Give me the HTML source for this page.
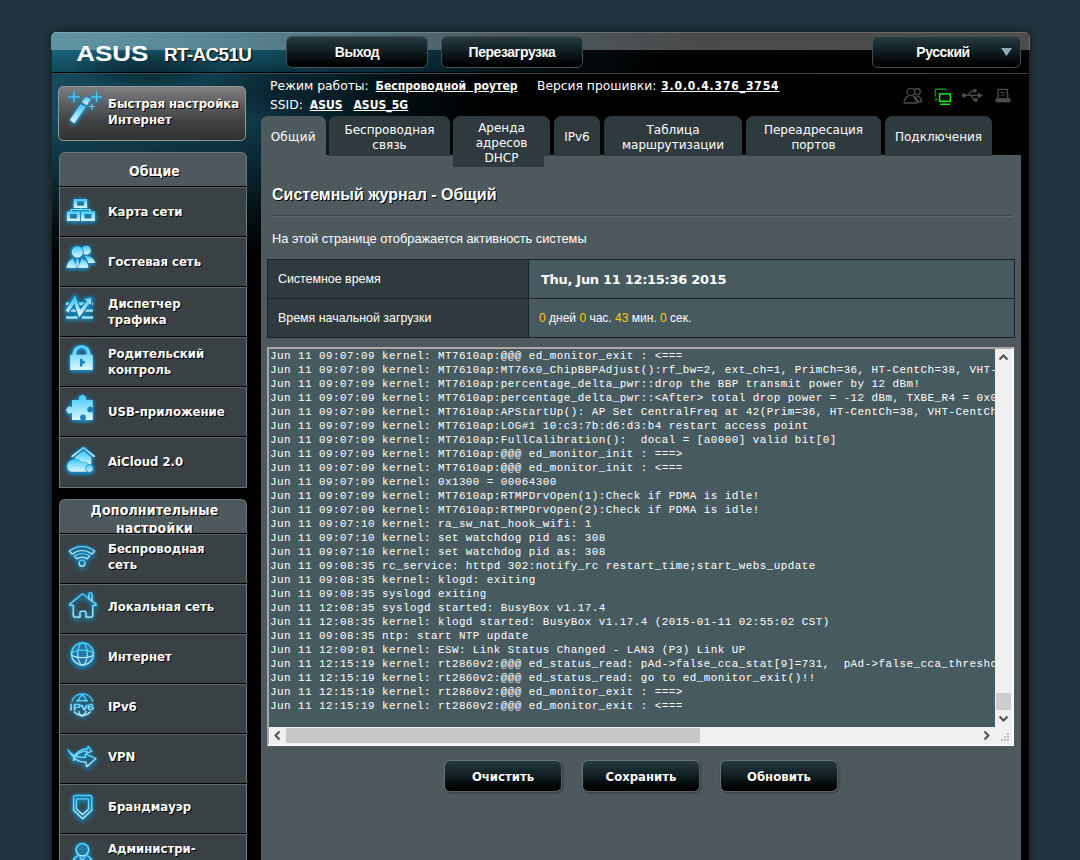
<!DOCTYPE html>
<html lang="ru">
<head>
<meta charset="utf-8">
<title>ASUS Wireless Router RT-AC51U - Системный журнал</title>
<style>
*{box-sizing:border-box;margin:0;padding:0}
html,body{width:1080px;height:860px;overflow:hidden;background:#21333e;}
body{font-family:"DejaVu Sans","Liberation Sans",sans-serif;color:#fff;position:relative}
#wrap{position:absolute;left:51px;top:32px;width:979px;height:828px;background:#000;border-radius:5px 5px 0 0;overflow:hidden}
#wrapsh{position:absolute;left:51px;top:32px;width:979px;height:840px;border-radius:5px 5px 0 0;box-shadow:0 0 7px 1px rgba(6,12,16,.5)}
#bg1{position:absolute;left:0;top:0;width:979px;height:18px;background:linear-gradient(90deg,#6094a3 0,#5a8a98 120px,#52737e 300px,#4c5a60 450px,#4a4a4a 650px,#4d4d4d 979px)}
#bg2{position:absolute;left:0;top:18px;width:979px;height:23px;background:linear-gradient(90deg,rgba(0,0,0,0) 0,rgba(0,0,0,.12) 150px,rgba(0,0,0,.4) 330px,rgba(0,0,0,.8) 480px,#000 620px),linear-gradient(#19627a,#104658)}
#bg3{position:absolute;left:0;top:42px;width:700px;height:260px;background:linear-gradient(90deg,#154a5c 0,#103d4c 190px,#0b2d39 240px,#051a21 300px,#01090c 370px,#000 440px);-webkit-mask-image:linear-gradient(#000 0,#000 45px,rgba(0,0,0,.6) 100px,rgba(0,0,0,.2) 150px,transparent 185px);mask-image:linear-gradient(#000 0,#000 45px,rgba(0,0,0,.6) 100px,rgba(0,0,0,.2) 150px,transparent 185px)}
#hdrline{position:absolute;left:0;top:40px;width:979px;height:1px;background:#000}
#hdrline2{position:absolute;left:0;top:41px;width:977px;height:1px;background:linear-gradient(90deg,#2b5160,#33474f 500px,#3a3f42 979px)}
.btn{position:absolute;height:31px;border-radius:6px;background:linear-gradient(#263a40 0,#0e1d21 50%,#000 92%);border:1px solid #434f54;color:#fff;font:bold 14px/29px "Liberation Sans",sans-serif;letter-spacing:-0.45px;text-align:center;text-shadow:1px 1px 0 #000}
.mi{position:absolute;left:8px;width:188px;height:50px;background:#3a4144;border-top:1px solid #5b6569;border-left:1px solid #6f7a7e;border-right:1px solid #6f7a7e}
.mi i{position:absolute;left:0;top:-2px;width:188px;height:1px;background:#000}
.mi span{position:absolute;left:48px;font:bold 13px/16px "DejaVu Sans Condensed","DejaVu Sans",sans-serif;color:#fff;text-shadow:1px 1px 0 #000;white-space:nowrap}
.mi span.one{top:16px}
.mi span.two{top:8px}
.mi.adv span.one{top:14px}
.mi.adv span.two{top:6px}
.mi svg{position:absolute;left:0;top:0;width:48px;height:48px;overflow:visible}
.cat{position:absolute;left:8px;width:188px;height:34px;background:#4d595d;border:1px solid #6b777b;border-bottom:0;border-radius:6px 6px 0 0;font:bold 14px/18px "DejaVu Sans Condensed","DejaVu Sans",sans-serif;text-align:center;text-shadow:1px 1px 0 #000;overflow:hidden}
.tab{position:absolute;top:84px;height:40px;background:#2f3a3e;border-radius:7px 7px 0 0;font:12px/15px "DejaVu Sans",sans-serif;padding-top:3px;z-index:3;text-align:center;color:#fff;display:flex;align-items:center;justify-content:center}
#content{position:absolute;left:210px;top:123px;width:760px;height:705px;background:#4d595d}
.info{position:absolute;font:12.3px/16px "DejaVu Sans",sans-serif;color:#fff;white-space:nowrap}
.info b{font:bold 12px/16px "DejaVu Sans Condensed","DejaVu Sans",sans-serif;text-decoration:underline;margin-left:3px;letter-spacing:0.05px}

#qis{position:absolute;left:7px;top:54px;width:188px;height:55px;border-radius:5px;background:linear-gradient(#7e7f80 0,#5a5b5c 35%,#414243 65%,#303132 100%);border:1px solid #939596;}
#qis span{position:absolute;left:49px;top:9px;font:bold 13px/16px "DejaVu Sans Condensed","DejaVu Sans",sans-serif;color:#fff;text-shadow:1px 1px 0 #000;white-space:nowrap}
.catend{position:absolute;left:8px;width:188px;height:1px;background:#6b777b}

#title{position:absolute;left:11px;top:30px;font:bold 16px/20px "Liberation Sans",sans-serif;color:#fff;text-shadow:1px 1px 0 #000;white-space:nowrap}
#hr{position:absolute;left:11px;top:60px;width:740px;height:2px;background:#3d484c;border-bottom:1px solid #5d696d}
#desc{position:absolute;left:11px;top:76px;font:12.8px/16px "Liberation Sans",sans-serif;color:#fff;white-space:nowrap}
#tbl{position:absolute;left:6px;top:104px;width:748px;height:79px;background:#1c2224}
.th{position:absolute;left:1px;width:260px;height:38px;background:#2f3a3e;font:12.4px/38px "Liberation Sans",sans-serif;padding-left:10px;color:#fff;white-space:nowrap}
.td{position:absolute;left:262px;width:485px;height:38px;background:#475a5f;font:12px/38px "Liberation Sans",sans-serif;padding-left:10px;color:#fff;white-space:nowrap}
.td .y{color:#fc0}
#systime{font:bold 13px/38px "DejaVu Sans","Liberation Sans",sans-serif;letter-spacing:-0.3px;margin-left:2px;position:relative;top:1px}
#ta{position:absolute;left:6px;top:192px;width:747px;height:399px;background:#f0f0f0;border:2px solid #a8a8a8;border-right-color:#fcfcfc;border-bottom-color:#f8f8f8;overflow:hidden}
#log{position:absolute;left:0;top:0;width:726px;height:378px;background:#475a5f;color:#fff;font:10.9px/14px "Liberation Mono",monospace;letter-spacing:0.46px;padding:0 0 0 1px;overflow:hidden;white-space:pre}
#vsb{position:absolute;left:726px;top:0;width:17px;height:378px;background:#f0f0f0}
#vthumb{position:absolute;left:1px;top:344px;width:15px;height:17px;background:#cdcdcd}
#hsb{position:absolute;left:0;top:378px;width:726px;height:17px;background:#f0f0f0}
#hthumb{position:absolute;left:17px;top:1px;width:414px;height:15px;background:#c8c8c8}
#grip{position:absolute;left:726px;top:378px;width:17px;height:17px}
.b2{top:605px;width:118px;height:32px;font:bold 13px/32px "DejaVu Sans Condensed","DejaVu Sans",sans-serif;letter-spacing:0;border-color:#65737a #55636a #55636a #65737a;box-shadow:1px 1px 2px rgba(0,0,0,.35)}
</style>
</head>
<body>
<div id="wrapsh"></div>
<div id="wrap">
  <div id="bg1"></div><div id="bg2"></div><div id="bg3"></div><div style="position:absolute;left:3px;top:0;width:973px;height:1px;background:rgba(255,255,255,.17)"></div><div style="position:absolute;right:0;top:3px;width:1px;height:15px;background:rgba(255,255,255,.17)"></div><div style="position:absolute;left:20px;top:14px;width:150px;height:44px;background:radial-gradient(ellipse at 50% 50%,rgba(0,0,0,.38) 0,rgba(0,0,0,.22) 40%,rgba(0,0,0,0) 70%)"></div><div style="position:absolute;left:150px;top:30px;width:140px;height:60px;background:radial-gradient(ellipse at 50% 50%,rgba(0,0,0,.3) 0,rgba(0,0,0,.15) 45%,rgba(0,0,0,0) 70%)"></div><div id="hdrline"></div><div style="position:absolute;left:0;top:18px;width:1px;height:810px;background:#262626;z-index:5;opacity:.9"></div><div style="position:absolute;right:0;top:18px;width:1px;height:810px;background:#2a2a2a;z-index:5"></div><div id="hdrline2"></div>
  <svg style="position:absolute;left:22px;top:11px" width="80" height="20" viewBox="0 0 80 20"><text x="3.2" y="17.5" font-family="Liberation Sans,sans-serif" font-weight="bold" font-size="21.4" fill="#fff" textLength="72" lengthAdjust="spacingAndGlyphs">ASUS</text></svg>
  <div style="position:absolute;left:113px;top:11px;font:bold 19px/24px 'Liberation Sans',sans-serif;letter-spacing:-0.7px;color:#fff;text-shadow:1px 1px 1px #000">RT-AC51U</div>
  <div class="btn" style="left:235px;top:4px;width:142px;height:32px;line-height:31px">Выход</div>
  <div class="btn" style="left:390px;top:4px;width:142px;height:32px;line-height:31px">Перезагрузка</div>
  <div class="btn" style="left:821px;top:4px;width:149px;height:32px;line-height:31px;padding-right:7px">Русский</div>
  <svg style="position:absolute;left:950px;top:16px" width="11" height="8" viewBox="0 0 11 8"><path d="M0 0H11L5.5 8Z" fill="#8ea9bb"/></svg>

  <div class="info" style="left:219px;top:46px">Режим работы: <b>Беспроводной&nbsp; роутер</b></div>
  <div class="info" style="left:486px;top:46px">Версия прошивки: <b style="letter-spacing:0.86px;margin-left:1px">3.0.0.4.376_3754</b></div>
  <div class="info" style="left:219px;top:65px">SSID: <b>ASUS</b>&nbsp; <b>ASUS_5G</b></div>

  <div class="tab" style="left:210px;width:64.5px;background:#4d595d;letter-spacing:0.3px">Общий</div>
  <div class="tab" style="left:278px;width:121px">Беспроводная<br>связь</div>
  <div class="tab" style="left:402px;width:97px"></div><div class="tab" style="left:402px;width:91px;height:51px;border-radius:7px 0 0 0;padding-top:4px;width:97px;background:none;z-index:4">Аренда<br>адресов<br>DHCP</div><div style="position:absolute;left:402px;top:123px;width:91px;height:12px;background:#2f3a3e;z-index:3"></div>
  <div class="tab" style="left:503px;width:46px">IPv6</div>
  <div class="tab" style="left:553px;width:138px">Таблица<br>маршрутизации</div>
  <div class="tab" style="left:695px;width:135px">Переадресация<br>портов</div>
  <div class="tab" style="left:834px;width:107px">Подключения</div>
  <div id="content">
    <div id="title">Системный журнал - Общий</div>
    <div id="hr"></div>
    <div id="desc">На этой странице отображается активность системы</div>
    <div id="tbl">
      <div class="th" style="top:1px">Системное время</div><div class="td" style="top:1px"><b id="systime">Thu, Jun 11 12:15:36 2015</b></div>
      <div class="th" style="top:40px">Время начальной загрузки</div><div class="td" style="top:40px"><span class="y">0</span> дней <span class="y">0</span> час. <span class="y">43</span> мин. <span class="y">0</span> сек.</div>
    </div>
    <div id="ta">
      <pre id="log">Jun 11 09:07:09 kernel: MT7610ap:@@@ ed_monitor_exit : &lt;===
Jun 11 09:07:09 kernel: MT7610ap:MT76x0_ChipBBPAdjust():rf_bw=2, ext_ch=1, PrimCh=36, HT-CentCh=38, VHT-CentCh=42
Jun 11 09:07:09 kernel: MT7610ap:percentage_delta_pwr::drop the BBP transmit power by 12 dBm!
Jun 11 09:07:09 kernel: MT7610ap:percentage_delta_pwr::&lt;After&gt; total drop power = -12 dBm, TXBE_R4 = 0x0
Jun 11 09:07:09 kernel: MT7610ap:APStartUp(): AP Set CentralFreq at 42(Prim=36, HT-CentCh=38, VHT-CentCh=42, BBP_BW=2)
Jun 11 09:07:09 kernel: MT7610ap:LOG#1 10:c3:7b:d6:d3:b4 restart access point
Jun 11 09:07:09 kernel: MT7610ap:FullCalibration():  docal = [a0000] valid bit[0]
Jun 11 09:07:09 kernel: MT7610ap:@@@ ed_monitor_init : ===&gt;
Jun 11 09:07:09 kernel: MT7610ap:@@@ ed_monitor_init : &lt;===
Jun 11 09:07:09 kernel: 0x1300 = 00064300
Jun 11 09:07:09 kernel: MT7610ap:RTMPDrvOpen(1):Check if PDMA is idle!
Jun 11 09:07:09 kernel: MT7610ap:RTMPDrvOpen(2):Check if PDMA is idle!
Jun 11 09:07:10 kernel: ra_sw_nat_hook_wifi: 1
Jun 11 09:07:10 kernel: set watchdog pid as: 308
Jun 11 09:07:10 kernel: set watchdog pid as: 308
Jun 11 09:08:35 rc_service: httpd 302:notify_rc restart_time;start_webs_update
Jun 11 09:08:35 kernel: klogd: exiting
Jun 11 09:08:35 syslogd exiting
Jun 11 12:08:35 syslogd started: BusyBox v1.17.4
Jun 11 12:08:35 kernel: klogd started: BusyBox v1.17.4 (2015-01-11 02:55:02 CST)
Jun 11 09:08:35 ntp: start NTP update
Jun 11 12:09:01 kernel: ESW: Link Status Changed - LAN3 (P3) Link UP
Jun 11 12:15:19 kernel: rt2860v2:@@@ ed_status_read: pAd-&gt;false_cca_stat[9]=731,  pAd-&gt;false_cca_threshold=160
Jun 11 12:15:19 kernel: rt2860v2:@@@ ed_status_read: go to ed_monitor_exit()!!
Jun 11 12:15:19 kernel: rt2860v2:@@@ ed_monitor_exit : ===&gt;
Jun 11 12:15:19 kernel: rt2860v2:@@@ ed_monitor_exit : &lt;===</pre>
      <div id="vsb"><svg width="17" height="17" viewBox="0 0 17 17" style="position:absolute;left:0;top:0"><path d="M4.5 10.5L8.5 6.5L12.5 10.5" fill="none" stroke="#505050" stroke-width="2"/></svg><div id="vthumb"></div><svg width="17" height="17" viewBox="0 0 17 17" style="position:absolute;left:0;bottom:0"><path d="M4.5 6.5L8.5 10.5L12.5 6.5" fill="none" stroke="#505050" stroke-width="2"/></svg></div>
      <div id="hsb"><svg width="17" height="17" viewBox="0 0 17 17" style="position:absolute;left:0;top:0"><path d="M10.5 4.5L6.5 8.5L10.5 12.5" fill="none" stroke="#505050" stroke-width="2"/></svg><div id="hthumb"></div><svg width="17" height="17" viewBox="0 0 17 17" style="position:absolute;right:0;top:0"><path d="M6.5 4.5L10.5 8.5L6.5 12.5" fill="none" stroke="#505050" stroke-width="2"/></svg></div>
      <div id="grip"><svg width="17" height="17" viewBox="0 0 17 17"><g fill="#bdbdbd"><rect x="12" y="6" width="2" height="2"/><rect x="9" y="9" width="2" height="2"/><rect x="12" y="9" width="2" height="2"/><rect x="6" y="12" width="2" height="2"/><rect x="9" y="12" width="2" height="2"/><rect x="12" y="12" width="2" height="2"/></g></svg></div>
    </div>
    <div class="btn b2" style="left:183px">Очистить</div>
    <div class="btn b2" style="left:321px">Сохранить</div>
    <div class="btn b2" style="left:459px">Обновить</div>
  </div>
  <div id="qis"><span>Быстрая настройка<br>Интернет</span></div>
  <div class="cat" style="top:120px;padding-top:9px;padding-left:3px">Общие</div>
  <div class="mi" style="top:155px"><i></i><span class="one">Карта сети</span></div>
  <div class="mi" style="top:205px"><i></i><span class="one">Гостевая сеть</span></div>
  <div class="mi" style="top:255px"><i></i><span class="two">Диспетчер<br>трафика</span></div>
  <div class="mi" style="top:305px"><i></i><span class="two">Родительский<br>контроль</span></div>
  <div class="mi" style="top:355px"><i></i><span class="one">USB-приложение</span></div>
  <div class="mi" style="top:405px"><i></i><span class="one">AiCloud 2.0</span></div>
  <div class="catend" style="top:455px"></div>
  <div class="cat" style="top:467px;height:35px;padding-top:1px;padding-left:3px;letter-spacing:0.15px">Дополнительные<br>настройки</div>
  <div class="mi adv" style="top:502px"><i></i><span class="two">Беспроводная<br>сеть</span></div>
  <div class="mi adv" style="top:552px"><i></i><span class="one">Локальная сеть</span></div>
  <div class="mi adv" style="top:602px"><i></i><span class="one">Интернет</span></div>
  <div class="mi adv" style="top:652px"><i></i><span class="one">IPv6</span></div>
  <div class="mi adv" style="top:702px"><i></i><span class="one">VPN</span></div>
  <div class="mi adv" style="top:752px"><i></i><span class="one">Брандмауэр</span></div>
  <div class="mi adv" style="top:802px"><i></i><span class="two">Администри-<br>рование</span></div>
<svg id="icons" width="1080" height="860" viewBox="0 0 1080 860" style="position:absolute;left:-51px;top:-32px;pointer-events:none">
<defs>
<linearGradient id="gf" x1="0" y1="0" x2="0" y2="1"><stop offset="0" stop-color="#3ccaff"/><stop offset="1" stop-color="#dff7ff"/></linearGradient>
<linearGradient id="gs" x1="0" y1="0" x2="0" y2="1"><stop offset="0" stop-color="#3fcfff"/><stop offset="1" stop-color="#b5efff"/></linearGradient>
<filter id="glow" x="-40%" y="-40%" width="180%" height="200%"><feGaussianBlur in="SourceAlpha" stdDeviation="2" result="b"/><feOffset in="b" dy="1.4" result="o"/><feFlood flood-color="#1893d6" flood-opacity="1"/><feComposite in2="o" operator="in" result="c"/><feMerge><feMergeNode in="c"/><feMergeNode in="c"/><feMergeNode in="SourceGraphic"/></feMerge></filter>
<filter id="glow2" x="-50%" y="-50%" width="200%" height="210%"><feGaussianBlur in="SourceAlpha" stdDeviation="1.1" result="b1"/><feGaussianBlur in="SourceAlpha" stdDeviation="2.8" result="b2"/><feOffset in="b2" dy="1.5" result="o2"/><feFlood flood-color="#1b86c0"/><feComposite in2="b1" operator="in" result="c1"/><feFlood flood-color="#2090cc"/><feComposite in2="o2" operator="in" result="c2"/><feMerge><feMergeNode in="c2"/><feMergeNode in="c2"/><feMergeNode in="c1"/><feMergeNode in="SourceGraphic"/></feMerge></filter><filter id="glow3" x="-50%" y="-50%" width="200%" height="210%"><feGaussianBlur in="SourceAlpha" stdDeviation="1.1" result="b1"/><feGaussianBlur in="SourceAlpha" stdDeviation="2.8" result="b2"/><feOffset in="b2" dy="1.5" result="o2"/><feFlood flood-color="#1b86c0"/><feComposite in2="b1" operator="in" result="c1"/><feFlood flood-color="#2090cc"/><feComposite in2="o2" operator="in" result="c2"/><feMerge><feMergeNode in="c2"/><feMergeNode in="c1"/><feMergeNode in="SourceGraphic"/></feMerge></filter>
</defs>
<!-- wand -->
<g filter="url(#glow)" fill="url(#gf)">
<path d="M85.9 96.7L90.6 99.3L86.9 105L81.8 102Z"/>
<path d="M80.5 104.3L85.6 107L74.4 123.2L69.9 120Z"/>
<path d="M73.4 91h1.2v5.2h5.2v1.2h-5.2v5.2h-1.2v-5.2h-5.2v-1.2h5.2Z" fill="#46cfff"/>
<path d="M95.9 91.5h1.2v4.7h4.7v1.2h-4.7v4.7h-1.2v-4.7h-4.7v-1.2h4.7Z" fill="#46cfff"/>
<path d="M91.5 103.8h0.9v2.4h2.4v0.9h-2.4v2.4h-0.9v-2.4h-2.4v-0.9h2.4Z" fill="#7fdcff"/>
</g>
<!-- network map -->
<g filter="url(#glow)" fill="url(#gf)" fill-rule="evenodd">
<path d="M73.8 199H87.1V207.9H73.8ZM77 201.2V205.8H84V201.2Z"/>
<path d="M66.9 211.2H80V221H66.9ZM70 214V218.5H77V214Z"/>
<path d="M81 211.2H95V221H81ZM84.3 214V218.5H91.5V214Z"/>
<path d="M80 207.9h1v1.2h9.5v2.1h-1v-1.1h-18v1.1h-1v-2.1h9.5Z"/>
</g>
<!-- guest -->
<g filter="url(#glow)" fill="url(#gf)">
<circle cx="86.3" cy="250.2" r="4.4"/>
<path d="M84.5 256.2C90 255.5 94 258.5 95.2 263H88.5C87.8 260.5 86.5 258 84.5 256.2Z"/>
<circle cx="77.4" cy="252" r="6.3" fill="#17709c"/><circle cx="77.4" cy="252" r="5.7"/>
<path d="M72.8 258.2L76.8 267.8H66.5C67 263.5 69 260 72.8 258.2Z"/>
<path d="M82 258.2L78 267.8H88.5C88 263.5 86 260 82 258.2Z"/>
<path d="M76.3 259.5H78.5L79 264L77.4 267.3L75.8 264Z"/>
</g>
<!-- traffic -->
<g filter="url(#glow)" fill="url(#gf)">
<path d="M66 302.3H70.5V304.8H66ZM79 302.3H84V304.8H79ZM91.5 302.3H93V304.8H91.5Z"/>
<path d="M71 309.2H77.5V311.5H71ZM85.5 309.2H93V311.5H85.5Z"/>
<path d="M66 316.1H77.5V318.6H66ZM82 316.1H93V318.6H82Z"/>
<path d="M67 311.4L74.7 299.6L79.7 313.6L88 302.2" fill="none" stroke="#17709c" stroke-width="5.6" stroke-linejoin="miter"/><path d="M84.2 298.9L91.6 297.3L91.2 305.3Z" fill="#17709c" stroke="#17709c" stroke-width="1.6"/><path d="M67 311.4L74.7 299.6L79.7 313.6L88 302.2" fill="none" stroke="url(#gf)" stroke-width="3.6" stroke-linejoin="miter"/><path d="M84.4 299L91.4 297.6L90.9 304.8Z"/>
</g>
<!-- lock -->
<g filter="url(#glow)" fill="url(#gf)" fill-rule="evenodd">
<path d="M70.2 354.8H72.5C72.5 348.5 76.5 344.9 81.5 344.9S90.5 348.5 90.5 354.8H92.7V370H70.2ZM76 354.8H87C87 350.8 84.7 348.2 81.5 348.2S76 350.8 76 354.8Z"/>
</g>
<path d="M80 359H82.5V361H85V363.5H82.5V366.5H80Z" fill="#1a82b8"/>
<!-- puzzle -->
<g filter="url(#glow)">
<path d="M72 400H79.6A3.4 3.4 0 1 1 85.4 400H92.7V420H72V412.6A3.4 3.4 0 1 1 72 407.4Z" fill="url(#gf)"/>
</g>
<circle cx="90.2" cy="409.4" r="2.9" fill="#1a82b8"/><circle cx="83" cy="417.4" r="2.9" fill="#1a82b8"/>
<!-- aicloud -->
<g filter="url(#glow)" fill="url(#gf)">
<path d="M83.4 446.4L95.3 456.2L94 457.2L83.4 448.8L72.3 457.2L71 456.2Z"/>
<path d="M83.4 450.8L91.2 457.2V466H75V457.2Z"/>
<path d="M67 466.5C67 462 70.5 459.3 75 459.3C78.5 459.3 80.5 460.8 82 462.5C84 461.3 87 462 88.2 464.2C91 464.2 93.2 466 93.2 468.4C93.2 470.6 91.5 472 89.5 472H72.5C69.5 472 67 469.8 67 466.5Z" stroke="#1a82b8" stroke-width="0.5"/>
<circle cx="89.4" cy="468.4" r="3.8" stroke="#1a82b8" stroke-width="0.8"/>
</g>
<!-- wifi -->
<g filter="url(#glow2)" fill="none" stroke="url(#gs)" stroke-width="1.2" stroke-linejoin="round">
<path d="M69.2 551.1Q82 541.5 94.8 551.1L91.8 554Q82 546.8 72.2 554Z"/>
<path d="M74.3 556Q82 551 89.7 556L87 558.8Q82 555.5 77 558.8Z"/>
<circle cx="82" cy="563.1" r="3"/>
</g>
<!-- house -->
<g filter="url(#glow2)" fill="none" stroke="url(#gs)" stroke-width="1.3" stroke-linejoin="round" stroke-linecap="round">
<path d="M82.5 593.7L69.9 604.1Q69.2 605.4 70.8 605.4H73.3V615.7Q73.3 617.2 74.8 617.2H80V612.3Q80 611.3 81 611.3H85Q86 611.3 86 612.3V617.2H91.2Q92.7 617.2 92.7 615.7V605.4H95.2Q96.7 605.4 96 604.1Z"/><path d="M88.9 598.8V594Q88.9 592.6 90.4 592.6Q92 592.6 92 594V601.2"/>
</g>
<!-- globe -->
<g filter="url(#glow2)" fill="none" stroke="url(#gs)" stroke-width="1.2">
<circle cx="82.5" cy="653.9" r="11" fill="#2a6d8e" fill-opacity="0.55"/>
<ellipse cx="82.5" cy="653.9" rx="4.8" ry="11"/>
<ellipse cx="82.5" cy="653.9" rx="11" ry="3.8"/>
</g>
<!-- ipv6 -->
<g filter="url(#glow3)" fill="none" stroke="url(#gs)" stroke-width="1.2">
<path d="M71.8 701.5A11 11 0 0 1 92.8 701.5M74 711.5A11 11 0 0 0 90.6 711.5"/>
<path d="M78 701.5Q79.5 696.5 82.3 695M86.6 701.5Q85 696.5 82.3 695M78.5 711Q80 715.5 82.3 716.2M86 711Q84.6 715.5 82.3 716.2M76 700.6H88"/>
<text x="69.6" y="710.3" font-family="Liberation Sans,sans-serif" font-size="9.8" fill="url(#gs)" stroke="url(#gs)" stroke-width="0.35" textLength="24.5" lengthAdjust="spacingAndGlyphs">IPv6</text>
</g>
<!-- vpn -->
<g filter="url(#glow2)" fill="none" stroke="url(#gs)" stroke-width="1.2" stroke-linejoin="round">
<path d="M73.5 760.5Q75 750 87.5 748.6L88.1 746.2L91.7 751.3L86.5 753.2L87 751Q79 751.5 75.3 756.5Z"/>
<path d="M67.9 749.8Q73.5 757.8 85.2 757.4L85.6 754L96 758.5L86.6 766.7L86 762.2Q76 761.8 73.2 756.5Q70 753.5 67.9 749.8Z"/>
</g>
<!-- firewall -->
<g filter="url(#glow2)" fill="none" stroke="url(#gs)" stroke-width="1.3" stroke-linejoin="round">
<path d="M75.2 795.5H90.1Q91.7 795.5 91.7 797.1V810.3L82.6 818.7L73.6 810.3V797.1Q73.6 795.5 75.2 795.5Z"/>
<path d="M77 798.8H88Q88.6 798.8 88.6 799.4V809L82.6 814.5L76.4 809V799.4Q76.4 798.8 77 798.8Z"/>
</g>
<!-- admin -->
<g filter="url(#glow2)" fill="none" stroke="url(#gs)" stroke-width="1.4">
<circle cx="82.4" cy="849.7" r="6.2" fill="#2a6d8e" fill-opacity="0.5"/>
<path d="M72.5 864Q73.5 857 79 855L82.4 861L85.8 855Q91.5 857 92.5 864" fill="#2a6d8e" fill-opacity="0.5"/>
</g>
<!-- status icons -->
<g fill="none" stroke="#4c4c4c" stroke-width="1.3">
<circle cx="917.2" cy="91.6" r="3.1"/><path d="M916.5 96.2Q921 96.5 921.6 101.5H918"/>
<circle cx="910.9" cy="92" r="3.7" fill="#000"/><path d="M904 103Q904.3 97.5 908.5 96.2M913.3 96.2Q917.3 97.5 917.8 103Z" fill="#000"/><path d="M904 103H917.8"/>
</g>
<g fill="none">
<path d="M935.3 96.5V90.6Q935.3 89.2 936.7 89.2H945Q946.3 89.2 946.3 90.6" stroke="#0a8c0a" stroke-width="1.5"/>
<rect x="935" y="98.3" width="2.4" height="2.4" fill="#0a8c0a"/>
<rect x="939.6" y="93.9" width="10.8" height="7.4" stroke="#00f000" stroke-width="1.5"/>
<path d="M940.2 104.3H950" stroke="#00f000" stroke-width="1.5"/>
</g>
<g fill="#4c4c4c" stroke="#4c4c4c" stroke-width="1.2">
<circle cx="964" cy="95.4" r="1.6"/><path d="M965 95.4H978" fill="none"/><path d="M978.6 93.6L982 95.4L978.6 97.2Z"/>
<path d="M968 95.4Q970.5 90.8 974 90.8" fill="none"/><circle cx="975" cy="90.8" r="1.3"/>
<path d="M971 95.4Q973 100 975 100" fill="none"/><rect x="974.6" y="98.8" width="2.4" height="2.4"/>
</g>
<g fill="none" stroke="#4c4c4c" stroke-width="1.4">
<path d="M998 98V90.5Q998 89.4 999 89.4H1007.5Q1006.5 91 1007.5 93.5Q1008.3 96 1007.5 98"/>
<path d="M1000.5 92.5H1005M1000.5 95H1005" stroke-width="1.2"/>
<rect x="996" y="98.6" width="14" height="3.4" fill="#4c4c4c" stroke-width="0.8"/>
</g>
</svg>
</div>
</body>
</html>
